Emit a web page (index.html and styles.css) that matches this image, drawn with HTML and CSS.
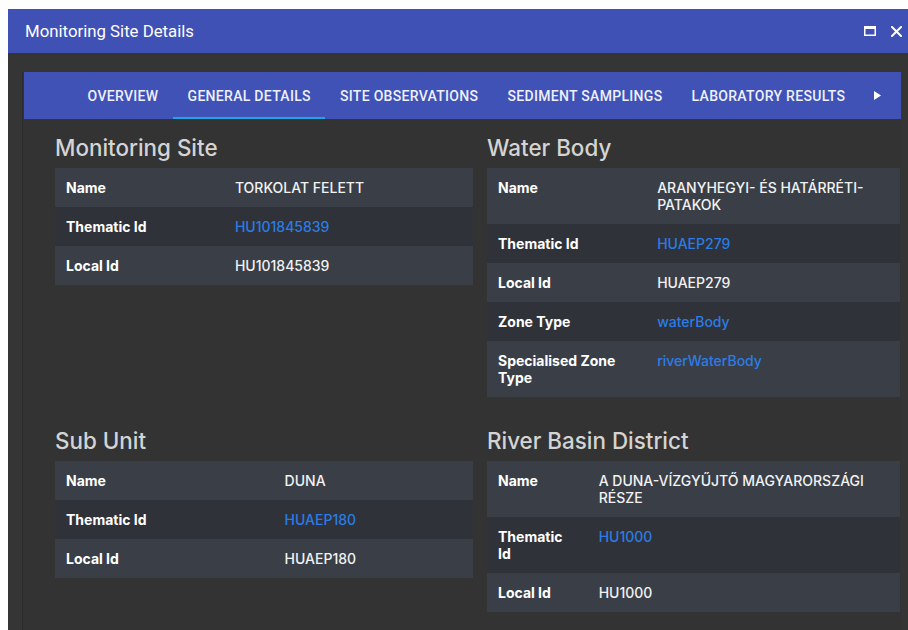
FILE: index.html
```html
<!DOCTYPE html>
<html lang="en">
<head>
<meta charset="utf-8">
<title>Monitoring Site Details</title>
<link rel="stylesheet" href="styles.css">
</head>
<body>
<div class="window">
  <header class="titlebar">
    <span class="title">Monitoring Site Details</span>
    <div class="win-actions">
      <button class="win-btn" aria-label="Maximize">
        <svg width="12" height="10" viewBox="0 0 12 10"><rect x="0.75" y="0.75" width="10.5" height="8.5" fill="none" stroke="#fff" stroke-width="1.5"/><rect x="0" y="0" width="12" height="3" fill="#fff"/></svg>
      </button>
      <button class="win-btn" aria-label="Close">
        <svg width="11" height="11" viewBox="0 0 11 11"><path d="M1 1 L10 10 M10 1 L1 10" stroke="#fff" stroke-width="2" stroke-linecap="square"/></svg>
      </button>
    </div>
  </header>
  <div class="window-body">
    <div class="panel">
      <nav class="tabs">
        <div class="tab-spacer"></div>
        <div class="tab-scroller">
          <a class="tab">Overview</a>
          <a class="tab active">General Details</a>
          <a class="tab">Site Observations</a>
          <a class="tab">Sediment Samplings</a>
          <a class="tab">Laboratory Results</a>
        </div>
        <button class="tab-arrow" aria-label="Next tabs">
          <svg width="7" height="9" viewBox="0 0 7 9"><path d="M0 0 L7 4.5 L0 9 Z" fill="#fff"/></svg>
        </button>
      </nav>
      <div class="content">
        <section class="group">
          <h2>Monitoring Site</h2>
          <table class="props">
            <tr><td class="key">Name</td><td>TORKOLAT FELETT</td></tr>
            <tr><td class="key">Thematic Id</td><td><a class="link">HU101845839</a></td></tr>
            <tr><td class="key">Local Id</td><td>HU101845839</td></tr>
          </table>
        </section>
        <section class="group">
          <h2>Water Body</h2>
          <table class="props">
            <tr><td class="key">Name</td><td>ARANYHEGYI- ÉS HATÁRRÉTI-PATAKOK</td></tr>
            <tr><td class="key">Thematic Id</td><td><a class="link">HUAEP279</a></td></tr>
            <tr><td class="key">Local Id</td><td>HUAEP279</td></tr>
            <tr><td class="key">Zone Type</td><td><a class="link">waterBody</a></td></tr>
            <tr><td class="key">Specialised Zone Type</td><td><a class="link">riverWaterBody</a></td></tr>
          </table>
        </section>
        <section class="group">
          <h2>Sub Unit</h2>
          <table class="props">
            <tr><td class="key">Name</td><td>DUNA</td></tr>
            <tr><td class="key">Thematic Id</td><td><a class="link">HUAEP180</a></td></tr>
            <tr><td class="key">Local Id</td><td>HUAEP180</td></tr>
          </table>
        </section>
        <section class="group">
          <h2>River Basin District</h2>
          <table class="props">
            <tr><td class="key">Name</td><td>A DUNA-VÍZGYŰJTŐ MAGYARORSZÁGI RÉSZE</td></tr>
            <tr><td class="key">Thematic Id</td><td><a class="link">HU1000</a></td></tr>
            <tr><td class="key">Local Id</td><td>HU1000</td></tr>
          </table>
        </section>
      </div>
    </div>
  </div>
</div>
</body>
</html>
```

FILE: styles.css
```css
* { box-sizing: border-box; }

html, body {
  margin: 0;
  height: 100%;
  background: #ffffff;
  overflow: hidden;
}

body {
  padding: 9px 0 0 8px;
  font-family: Inter, "Liberation Sans", sans-serif;
}

.window {
  width: 900px;
  height: 621px;
  display: flex;
  flex-direction: column;
  background: #353535;
}

/* title bar */
.titlebar {
  height: 44px;
  flex: none;
  display: flex;
  align-items: center;
  justify-content: space-between;
  padding: 0 6px 0 17px;
  background: #3f51b5;
  color: #fff;
}

.title {
  font-family: Roboto, "Liberation Sans", sans-serif;
  font-size: 16.8px;
  font-weight: 400;
}

.win-actions {
  display: flex;
  align-items: center;
  gap: 15px;
}

.win-btn {
  border: 0;
  padding: 0;
  background: none;
  display: flex;
}

/* body */
.window-body {
  flex: 1;
  display: flex;
  padding: 19px 7px 0 14px;
  min-height: 0;
}

.panel {
  flex: 1;
  display: flex;
  flex-direction: column;
  border-left: 1px solid #2a2a2a;
  background: #333333;
  padding-left: 1px;
}

/* tabs */
.tabs {
  height: 47px;
  flex: none;
  display: flex;
  background: #4052b6;
}

.tab-spacer {
  width: 49px;
  flex: none;
}

.tab-scroller {
  flex: 1;
  display: flex;
  overflow: hidden;
}

.tab {
  position: relative;
  flex: none;
  display: flex;
  align-items: center;
  padding: 0 14.6px;
  font-family: Roboto, "Liberation Sans", sans-serif;
  font-size: 14px;
  font-weight: 500;
  letter-spacing: 0.3px;
  text-transform: uppercase;
  color: #eef0fa;
}

.tab.active::after {
  content: "";
  position: absolute;
  left: 0;
  right: 0;
  bottom: 0;
  height: 2px;
  background: #1fa5e6;
}

.tab-arrow {
  width: 48px;
  flex: none;
  border: 0;
  padding: 0;
  background: none;
  display: flex;
  align-items: center;
  justify-content: center;
}

/* detail groups */
.content {
  display: grid;
  grid-template-columns: 418fr 413fr;
  column-gap: 14px;
  row-gap: 30px;
  align-items: start;
  padding: 15px 1px 0 31px;
}

.group h2 {
  margin: 0 0 6px;
  font-size: 22.4px;
  line-height: 28px;
  font-weight: 500;
  color: #d4d4d4;
}

.props {
  width: 100%;
  border-collapse: collapse;
  font-size: 14px;
  line-height: 17px;
  color: #f2f2f2;
}

.props td {
  padding: 11px;
  vertical-align: top;
  font-weight: 500;
}

.props td.key {
  font-weight: 700;
  color: #ffffff;
}

.props tr:nth-child(odd) { background: #3a3f47; }
.props tr:nth-child(even) { background: #2f3238; }

.link {
  color: #2a7de6;
  cursor: pointer;
}
```
